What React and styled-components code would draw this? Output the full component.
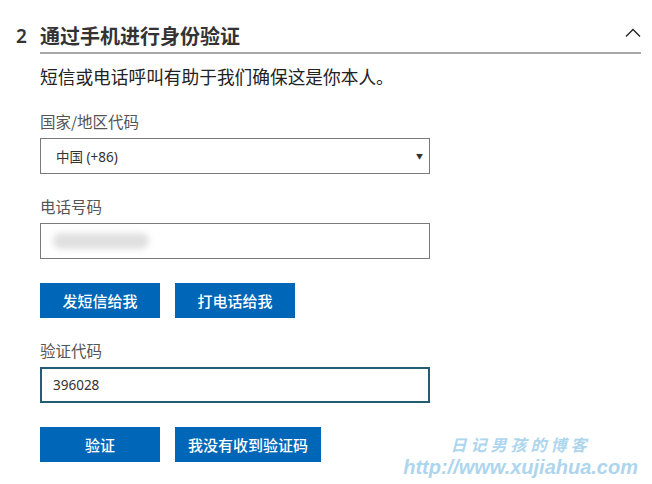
import styled, { createGlobalStyle } from "styled-components";

const Global = createGlobalStyle`
  body {
    margin: 0;
    background: #fff;
    font-family: "Noto Sans", "Noto Sans CJK SC", sans-serif;
  }
`;

const Page = styled.div`
  position: relative;
  width: 652px;
  height: 484px;
  overflow: hidden;
  padding: 21px 11px 0 16px;
  box-sizing: border-box;
`;

const Header = styled.div`
  display: flex;
  align-items: flex-start;
`;

const StepNo = styled.div`
  width: 24px;
  font-size: 19px;
  font-weight: 600;
  line-height: 30px;
  color: #333;
`;

const TitleBar = styled.div`
  flex: 1;
  display: flex;
  justify-content: space-between;
  align-items: center;
  border-bottom: 2px solid #a6a6a6;
  padding-bottom: 1px;
`;

const Title = styled.h2`
  margin: 0;
  font-size: 20px;
  font-weight: 700;
  line-height: 30px;
  color: #333;
  font-family: "Noto Sans CJK SC", sans-serif;
`;

const Body = styled.div`
  padding-left: 24px;
  display: flex;
  flex-direction: column;
  align-items: flex-start;
`;

const Intro = styled.p`
  margin: 9px 0 0;
  font-size: 17.7px;
  line-height: 26px;
  color: #222;
  font-family: "Noto Sans CJK SC", sans-serif;
`;

const Label = styled.div`
  margin-top: ${(p) => p.$top || 21}px;
  margin-bottom: 6px;
  font-size: 15.5px;
  line-height: 22px;
  color: #555;
  font-family: "Noto Sans CJK SC", sans-serif;
`;

const Field = styled.div`
  width: 390px;
  height: 36px;
  box-sizing: border-box;
  border: ${(p) => (p.$focus ? "2px solid #245c73" : "1px solid #7a7a7a")};
  display: flex;
  align-items: center;
  justify-content: space-between;
  padding: 0 ${(p) => (p.$focus ? 11 : 6)}px 0 ${(p) => (p.$focus ? 11 : 15)}px;
  font-size: 13.5px;
  color: #333;
  position: relative;
  font-family: "Noto Sans", "Noto Sans CJK SC", sans-serif;
`;

const Caret = styled.span`
  font-size: 7px;
  color: #333;
`;

const Blur = styled.span`
  position: absolute;
  left: 12px;
  top: 9px;
  width: 96px;
  height: 16px;
  border-radius: 8px;
  background: #e0e0e0;
  filter: blur(3px);
`;

const Actions = styled.div`
  display: flex;
  gap: 15px;
  margin-top: 24px;
`;

const Button = styled.button`
  height: 35px;
  min-width: 120px;
  padding: 0 13px;
  border: 0;
  background: #0067b8;
  color: #fff;
  font-size: 15px;
  font-weight: 500;
  font-family: "Noto Sans CJK SC", sans-serif;
`;

const Mark = styled.div`
  position: absolute;
  right: 14px;
  bottom: 5px;
  display: flex;
  flex-direction: column;
  align-items: center;
  color: #add6ee;
  font-style: italic;
`;

const MarkCn = styled.span`
  font-size: 16px;
  letter-spacing: 4px;
  font-weight: 700;
  font-family: "Noto Sans CJK SC", sans-serif;
  line-height: 22px;
`;

const MarkUrl = styled.span`
  font-size: 20px;
  font-weight: 700;
  font-family: "Liberation Sans", Arial, sans-serif;
  line-height: 24px;
`;

function ChevronUp() {
  return (
    <svg width="16" height="9" viewBox="0 0 16 9" style={{ marginBottom: 8 }}>
      <path d="M1 8.5 L8 1.5 L15 8.5" fill="none" stroke="#222" strokeWidth="1.3" />
    </svg>
  );
}

export default function App() {
  return (
    <Page>
      <Global />
      <Header>
        <StepNo>2</StepNo>
        <TitleBar>
          <Title>通过手机进行身份验证</Title>
          <ChevronUp />
        </TitleBar>
      </Header>
      <Body>
        <Intro>短信或电话呼叫有助于我们确保这是你本人。</Intro>
        <Label>国家/地区代码</Label>
        <Field>
          <span>中国 (+86)</span>
          <Caret>▼</Caret>
        </Field>
        <Label>电话号码</Label>
        <Field>
          <Blur />
        </Field>
        <Actions>
          <Button>发短信给我</Button>
          <Button>打电话给我</Button>
        </Actions>
        <Label>验证代码</Label>
        <Field $focus>
          <span>396028</span>
        </Field>
        <Actions>
          <Button>验证</Button>
          <Button>我没有收到验证码</Button>
        </Actions>
      </Body>
      <Mark>
        <MarkCn>日记男孩的博客</MarkCn>
        <MarkUrl>http://www.xujiahua.com</MarkUrl>
      </Mark>
    </Page>
  );
}
